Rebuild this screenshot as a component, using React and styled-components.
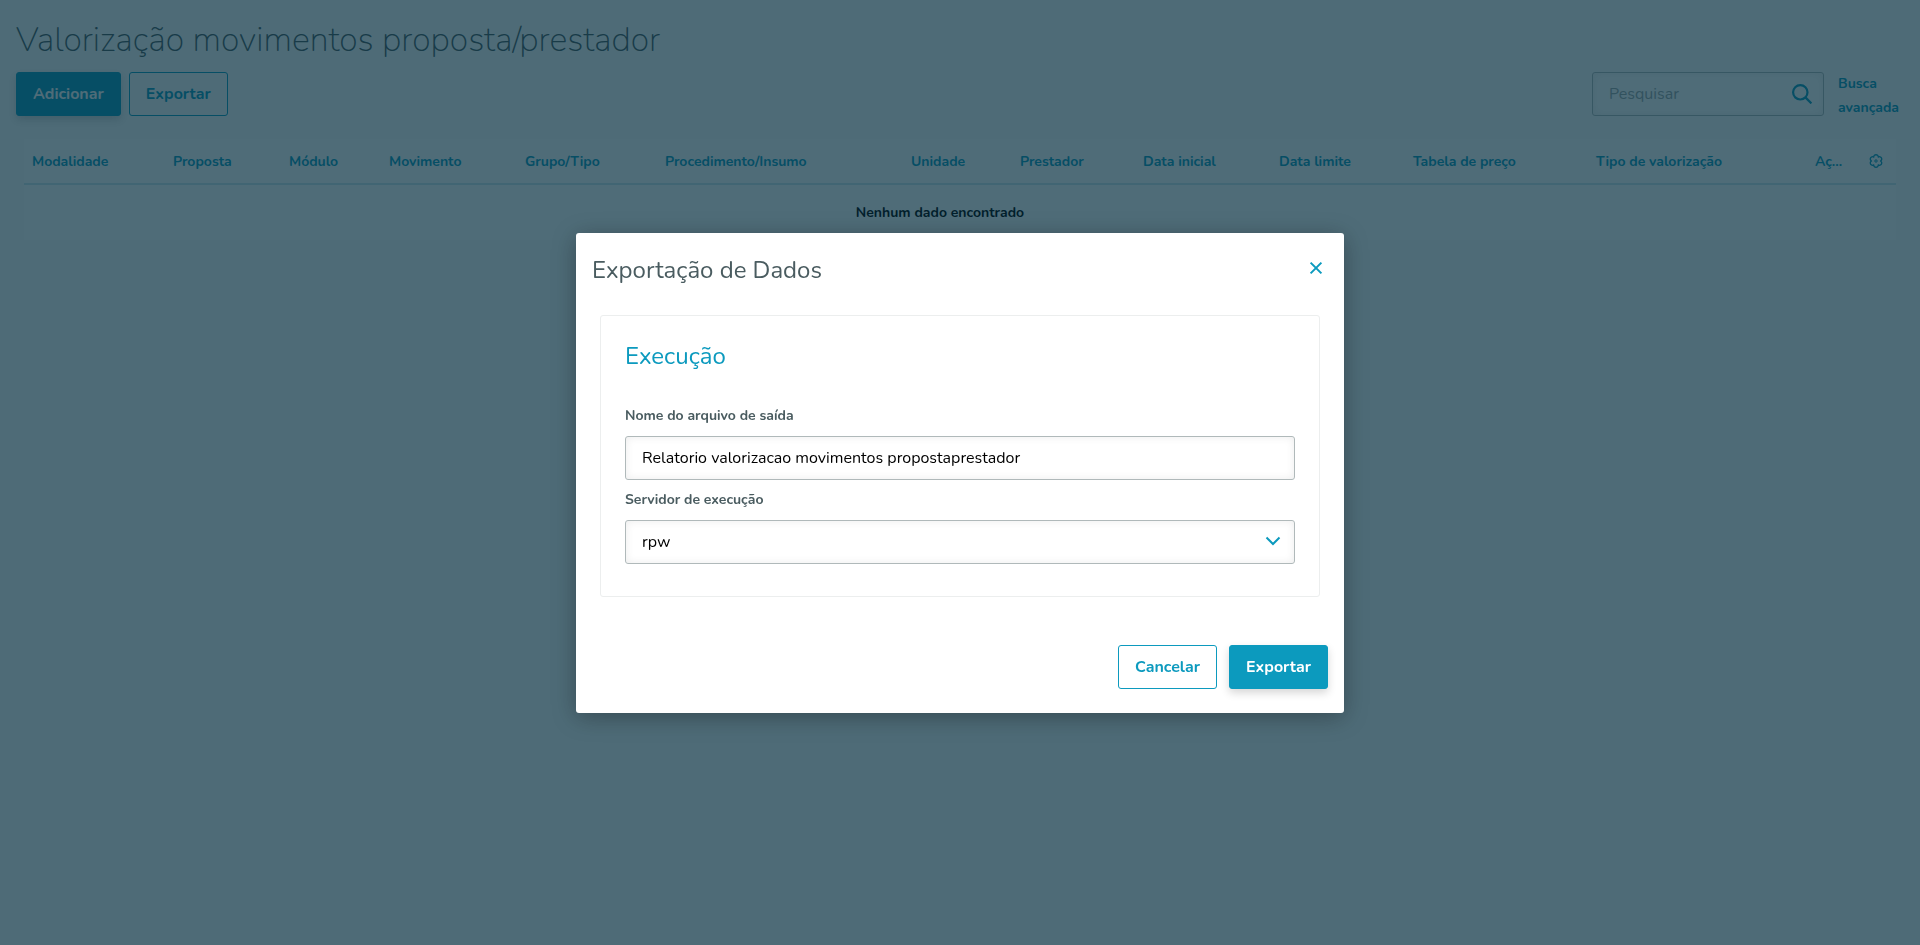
import React, {useState} from 'react';
import styled, {createGlobalStyle} from "styled-components";

const GlobalStyle = createGlobalStyle`
  * {
    box-sizing: border-box;
  }
  body {
    margin: 0;
    background-color: #fbfbfb;
    color: #000;
    font-family: Nunito, "Nunito Sans", Lato, "Open Sans", sans-serif;
    font-size: 14px;
  }
  button, input, select {
    font-family: inherit;
  }
`;

const Page = styled.main`
  padding: 16px 16px 0;
`;

const PageTitle = styled.h1`
  margin: 0 0 8px;
  color: #4a5c60;
  font-size: 34px;
  font-weight: 200;
  line-height: 48px;
`;

const Toolbar = styled.div`
  display: flex;
  align-items: flex-start;
  justify-content: space-between;
`;

const Actions = styled.div`
  display: flex;
  gap: ${({$gap}) => $gap || "8px"};
`;

const Button = styled.button`
  height: 44px;
  padding: 0 16px;
  border: 1px solid #0c9abe;
  border-radius: 3px;
  background-color: ${({$primary}) => $primary ? "#0c9abe" : "transparent"};
  color: ${({$primary}) => $primary ? "#fff" : "#0c9abe"};
  box-shadow: ${({$primary}) => $primary ? "0 4px 8px rgba(0, 0, 0, 0.16)" : "none"};
  font-size: 16px;
  font-weight: 700;
  cursor: pointer;
`;

const Search = styled.form`
  display: flex;
  align-items: flex-start;
  gap: 14px;
  width: 312px;
`;

const SearchField = styled.div`
  position: relative;
  flex: 0 0 232px;
`;

const Field = styled.input`
  display: block;
  width: 100%;
  height: 44px;
  padding: 0 16px;
  border: 1px solid #b0b9ba;
  border-radius: 3px;
  background-color: #fff;
  box-shadow: inset 0 0 8px rgba(0, 0, 0, 0.08);
  color: #000;
  font-size: 16px;
  appearance: none;
  &::placeholder {
    color: #9da7a9;
    opacity: 1;
  }
`;

const SearchButton = styled.button`
  position: absolute;
  top: 10px;
  right: 10px;
  width: 24px;
  height: 24px;
  padding: 2px;
  border: 0;
  background: none;
  color: #0c9abe;
`;

const AdvancedLink = styled.a`
  color: #0c9abe;
  font-weight: 700;
  line-height: 24px;
  text-decoration: none;
`;

const TableWrapper = styled.div`
  margin: 19px 8px 0;
  background-color: #fff;
`;

const Table = styled.table`
  width: 100%;
  border-collapse: collapse;
  table-layout: fixed;
`;

const HeaderCell = styled.th`
  width: ${({$width}) => $width}px;
  height: 45px;
  padding: 0 8px;
  border-bottom: 2px solid #cfe8ef;
  color: #0c9abe;
  overflow: hidden;
  text-align: left;
  text-overflow: ellipsis;
  white-space: nowrap;
`;

const EmptyCell = styled.td`
  height: 56px;
  font-weight: 700;
  text-align: center;
`;

const GearButton = styled.button`
  display: flex;
  margin: 0 auto;
  padding: 0;
  border: 0;
  background: none;
  color: #0c9abe;
`;

const Overlay = styled.div`
  position: fixed;
  inset: 0;
  display: flex;
  align-items: center;
  justify-content: center;
  background-color: rgba(4, 45, 63, 0.7);
`;

const Modal = styled.section`
  width: 768px;
  max-width: 90%;
  border-radius: 3px;
  background-color: #fff;
  box-shadow: 0 4px 24px rgba(0, 0, 0, 0.3);
`;

const ModalHeader = styled.header`
  display: flex;
  justify-content: space-between;
  align-items: flex-start;
  padding: 19px 16px 0;
`;

const ModalTitle = styled.h2`
  margin: 0;
  color: #4a5c60;
  font-size: 24px;
  font-weight: 400;
  line-height: 36px;
`;

const CloseButton = styled.button`
  display: flex;
  padding: 9px 5px;
  border: 0;
  background: none;
  color: #0c9abe;
`;

const Panel = styled.div`
  margin: 27px 24px 0;
  padding: 22px 24px 32px;
  border: 1px solid #eceeee;
  border-radius: 3px;
`;

const PanelTitle = styled.h3`
  margin: 0 0 22px;
  color: #0c9abe;
  font-size: 24px;
  font-weight: 400;
  line-height: 36px;
`;

const Label = styled.label`
  display: block;
  padding: 8px 0;
  color: #4a5c60;
  font-weight: 700;
  line-height: 24px;
`;

const SelectWrapper = styled.div`
  position: relative;
`;

const Chevron = styled.svg`
  position: absolute;
  top: 16px;
  right: 14px;
  color: #0c9abe;
  pointer-events: none;
`;

const ModalFooter = styled.footer`
  display: flex;
  justify-content: flex-end;
  padding: 48px 16px 24px;
`;

const columns = [
  {label: "Modalidade", width: 141},
  {label: "Proposta", width: 116},
  {label: "Módulo", width: 100},
  {label: "Movimento", width: 136},
  {label: "Grupo/Tipo", width: 140},
  {label: "Procedimento/Insumo", width: 246},
  {label: "Unidade", width: 109},
  {label: "Prestador", width: 123},
  {label: "Data inicial", width: 136},
  {label: "Data limite", width: 134},
  {label: "Tabela de preço", width: 183},
  {label: "Tipo de valorização", width: 219},
  {label: "Ações", width: 49}
];

const ExportModal = ({onClose}) => {
  const [fileName, setFileName] = useState("Relatorio valorizacao movimentos propostaprestador");
  const [server, setServer] = useState("rpw");

  return (
    <Overlay>
      <Modal role="dialog" aria-labelledby="modal-title">
        <ModalHeader>
          <ModalTitle id="modal-title">Exportação de Dados</ModalTitle>
          <CloseButton type="button" aria-label="Fechar" onClick={onClose}>
            <svg width="14" height="14" viewBox="0 0 14 14" fill="none" stroke="currentColor" strokeWidth="2">
              <path d="M1.6 1.6 12.4 12.4M12.4 1.6 1.6 12.4" />
            </svg>
          </CloseButton>
        </ModalHeader>
        <Panel>
          <PanelTitle>Execução</PanelTitle>
          <Label htmlFor="file-name">Nome do arquivo de saída</Label>
          <Field id="file-name" value={fileName} onChange={e => setFileName(e.target.value)} />
          <Label htmlFor="server">Servidor de execução</Label>
          <SelectWrapper>
            <Field as="select" id="server" value={server} onChange={e => setServer(e.target.value)}>
              <option value="rpw">rpw</option>
            </Field>
            <Chevron width="16" height="10" viewBox="0 0 16 10" fill="none" stroke="currentColor" strokeWidth="2">
              <path d="M1.5 1.5 8 8 14.5 1.5" />
            </Chevron>
          </SelectWrapper>
        </Panel>
        <ModalFooter>
          <Actions $gap="12px">
            <Button type="button" onClick={onClose}>Cancelar</Button>
            <Button type="button" $primary>Exportar</Button>
          </Actions>
        </ModalFooter>
      </Modal>
    </Overlay>
  )
};

const App = () => {
  const [showExport, setShowExport] = useState(true);

  return (
    <>
      <GlobalStyle />
      <Page>
        <PageTitle>Valorização movimentos proposta/prestador</PageTitle>
        <Toolbar>
          <Actions>
            <Button type="button" $primary>Adicionar</Button>
            <Button type="button" onClick={() => setShowExport(true)}>Exportar</Button>
          </Actions>
          <Search onSubmit={e => e.preventDefault()}>
            <SearchField>
              <Field type="search" placeholder="Pesquisar" aria-label="Pesquisar" />
              <SearchButton type="submit" aria-label="Buscar">
                <svg width="20" height="20" viewBox="0 0 20 20" fill="none" stroke="currentColor" strokeWidth="2.2">
                  <circle cx="8.3" cy="8.3" r="7.2" />
                  <path d="M13.4 13.4 19.4 19.4" />
                </svg>
              </SearchButton>
            </SearchField>
            <AdvancedLink href="#">Busca avançada</AdvancedLink>
          </Search>
        </Toolbar>
        <TableWrapper>
          <Table>
            <thead>
              <tr>
                {columns.map(({label, width}) => (
                  <HeaderCell key={label} $width={width}>{label}</HeaderCell>
                ))}
                <HeaderCell $width={40}>
                  <GearButton type="button" aria-label="Gerenciar colunas">
                    <svg width="16" height="16" viewBox="0 0 16 16" fill="none" stroke="currentColor" strokeWidth="1.3" strokeLinejoin="round">
                      <path d="M12.5 8C15.24 9.54 12.95 13.5 10.25 11.9C10.29 15.04 5.71 15.04 5.75 11.9C3.05 13.5 0.76 9.54 3.5 8C0.76 6.46 3.05 2.5 5.75 4.1C5.71 0.96 10.29 0.96 10.25 4.1C12.95 2.5 15.24 6.46 12.5 8Z" />
                      <circle cx="8" cy="8" r="1.2" strokeWidth="1" />
                    </svg>
                  </GearButton>
                </HeaderCell>
              </tr>
            </thead>
            <tbody>
              <tr>
                <EmptyCell colSpan={columns.length}>Nenhum dado encontrado</EmptyCell>
                <td />
              </tr>
            </tbody>
          </Table>
        </TableWrapper>
      </Page>
      {showExport && <ExportModal onClose={() => setShowExport(false)} />}
    </>
  )
};

export default App;
